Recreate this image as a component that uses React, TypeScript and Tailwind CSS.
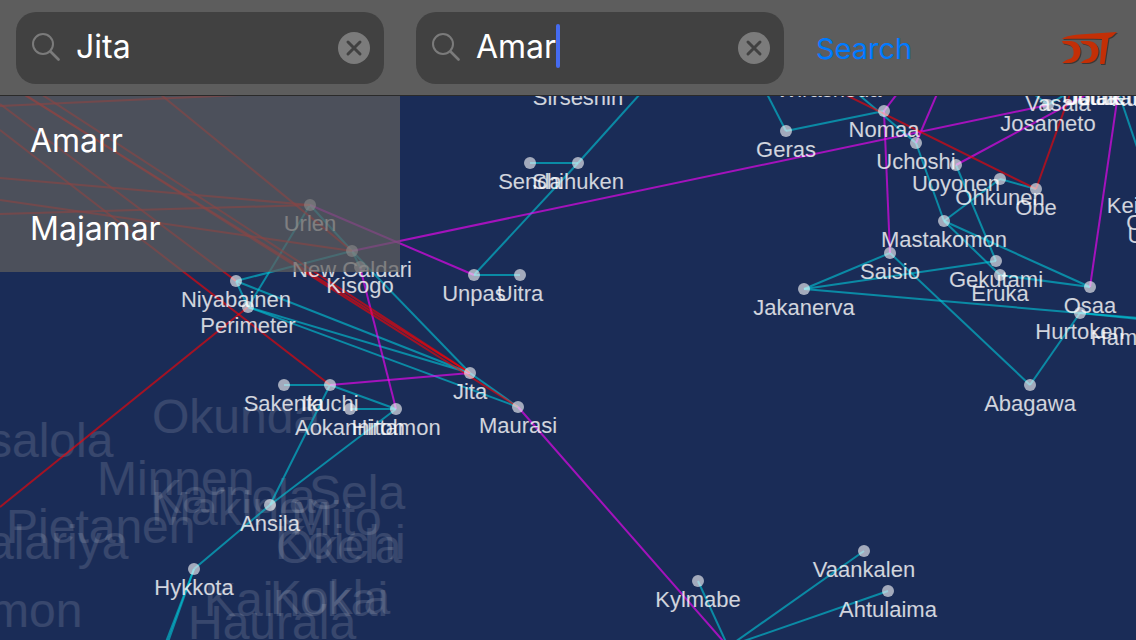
import { useState } from "react";

type Kind = "constellation" | "region" | "sector";
type Point = [number, number];
type Edge = [Kind, number, number, number, number];

const strokes: Record<Kind, string> = {
  constellation: "stroke-[#00c8d8]/60",
  region: "stroke-[#ff00ff]/60",
  sector: "stroke-[#ff0000]/60",
};

const systems: Record<string, Point> = {
  Urlen: [310, 205],
  "New Caldari": [352, 251],
  Kisogo: [360, 267],
  Niyabainen: [236, 281],
  Perimeter: [248, 307],
  Jita: [470, 373],
  Maurasi: [518, 407],
  Sakenta: [284, 385],
  Ikuchi: [330, 385],
  Aokannitoh: [350, 409],
  Hirtamon: [396, 409],
  Ansila: [270, 505],
  Hykkota: [194, 569],
  Unpas: [474, 275],
  Uitra: [520, 275],
  Senda: [530, 163],
  Shihuken: [578, 163],
  Sirseshin: [578, 79],
  Wirashoda: [829, 71],
  Geras: [786, 131],
  Nomaa: [884, 111],
  Uchoshi: [916, 143],
  Uoyonen: [956, 165],
  Ohkunen: [1000, 179],
  Obe: [1036, 189],
  Mastakomon: [944, 221],
  Saisio: [890, 253],
  Gekutami: [996, 261],
  Eruka: [1000, 275],
  Osaa: [1090, 287],
  Hurtoken: [1080, 313],
  Jakanerva: [804, 289],
  Abagawa: [1030, 385],
  Kylmabe: [698, 581],
  Vaankalen: [864, 551],
  Ahtulaima: [888, 591],
  Josameto: [1048, 105],
  Vasala: [1058, 85],
  Uotila: [1090, 79],
  Jatate: [1096, 79],
  Jotakan: [1106, 79],
  Kulelen: [1148, 80],
  Keikaken: [1152, 187],
  Otsela: [1158, 204],
  Uemon: [1163, 217],
  Hampinen: [1141, 319],
};

const links: [Kind, string, string][] = [
  ["constellation", "Urlen", "Perimeter"],
  ["constellation", "Urlen", "New Caldari"],
  ["constellation", "New Caldari", "Niyabainen"],
  ["constellation", "New Caldari", "Kisogo"],
  ["constellation", "New Caldari", "Jita"],
  ["constellation", "Niyabainen", "Perimeter"],
  ["constellation", "Niyabainen", "Jita"],
  ["constellation", "Perimeter", "Jita"],
  ["constellation", "Perimeter", "Maurasi"],
  ["constellation", "Jita", "Maurasi"],
  ["constellation", "Sakenta", "Ikuchi"],
  ["constellation", "Aokannitoh", "Hirtamon"],
  ["constellation", "Ikuchi", "Hirtamon"],
  ["constellation", "Ikuchi", "Ansila"],
  ["constellation", "Hirtamon", "Ansila"],
  ["constellation", "Ansila", "Hykkota"],
  ["constellation", "Unpas", "Uitra"],
  ["constellation", "Unpas", "Shihuken"],
  ["constellation", "Senda", "Shihuken"],
  ["constellation", "Geras", "Nomaa"],
  ["constellation", "Uchoshi", "Mastakomon"],
  ["constellation", "Mastakomon", "Ohkunen"],
  ["constellation", "Ohkunen", "Obe"],
  ["constellation", "Uoyonen", "Gekutami"],
  ["constellation", "Mastakomon", "Osaa"],
  ["constellation", "Mastakomon", "Eruka"],
  ["constellation", "Eruka", "Osaa"],
  ["constellation", "Jakanerva", "Saisio"],
  ["constellation", "Jakanerva", "Gekutami"],
  ["constellation", "Jakanerva", "Hurtoken"],
  ["constellation", "Saisio", "Abagawa"],
  ["constellation", "Hurtoken", "Abagawa"],
  ["region", "Urlen", "Unpas"],
  ["region", "New Caldari", "Josameto"],
  ["region", "Kisogo", "Hirtamon"],
  ["region", "Ikuchi", "Jita"],
  ["region", "Nomaa", "Saisio"],
];

/* Routes whose far end lies beyond the visible part of the map. */
const openEdges: Edge[] = [
  ["constellation", 194, 569, 168, 642],
  ["constellation", 194, 569, 166, 642],
  ["constellation", 578, 163, 640, 94],
  ["constellation", 767, 94, 786, 131],
  ["constellation", 858, 94, 916, 143],
  ["constellation", 1080, 313, 1138, 318],
  ["constellation", 1080, 313, 1138, 319],
  ["constellation", 698, 581, 726, 642],
  ["constellation", 864, 551, 735, 642],
  ["constellation", 888, 591, 741, 642],
  ["constellation", 1119, 94, 1138, 150],
  ["constellation", 1048, 105, 1034, 94],
  ["constellation", 1048, 105, 1066, 94],
  ["region", 518, 407, 724, 642],
  ["region", 884, 111, 897, 94],
  ["region", 916, 143, 937, 94],
  ["region", 956, 165, 1088, 94],
  ["region", 1090, 287, 1118, 94],
  ["sector", 0, 106, 260, 94],
  ["sector", 23, 94, 470, 373],
  ["sector", 41, 94, 470, 373],
  ["sector", 24, 94, 518, 407],
  ["sector", 160, 94, 352, 251],
  ["sector", 0, 178, 310, 205],
  ["sector", 0, 214, 310, 205],
  ["sector", 0, 200, 352, 251],
  ["sector", 0, 104, 236, 281],
  ["sector", 0, 130, 330, 385],
  ["sector", 248, 307, 0, 507],
  ["sector", 844, 94, 1036, 189],
  ["sector", 1036, 189, 1070, 94],
];

const constellations: [string, number, number][] = [
  ["Okunda", 152, 433],
  ["salola", -12, 457],
  ["Minnen", 97, 495],
  ["Karnola", 150, 513],
  ["Makinen", 151, 525],
  ["Sela", 309, 509],
  ["Mito", 291, 535],
  ["Pietanen", 6, 543],
  ["alariya", -13, 559],
  ["Koichi", 275, 559],
  ["Okela", 276, 563],
  ["Kainokai", 204, 616],
  ["Kokla", 270, 614],
  ["mon", -11, 627],
  ["Haurala", 188, 639],
];

function StarMap() {
  return (
    <svg
      className="absolute inset-0 h-full w-full"
      role="img"
      aria-label="Star map"
      fontFamily='"Liberation Sans", Helvetica, Arial, sans-serif'
    >
      <g transform="translate(0 -96)">
        <g className="fill-white/13 text-[48px]">
          {constellations.map(([name, x, y]) => (
            <text key={name} x={x} y={y}>
              {name}
            </text>
          ))}
        </g>
        <g strokeWidth="2">
          {links.map(([kind, a, b]) => (
            <line
              key={a + b}
              className={strokes[kind]}
              x1={systems[a][0]}
              y1={systems[a][1]}
              x2={systems[b][0]}
              y2={systems[b][1]}
            />
          ))}
          {openEdges.map(([kind, x1, y1, x2, y2], i) => (
            <line key={i} className={strokes[kind]} x1={x1} y1={y1} x2={x2} y2={y2} />
          ))}
        </g>
        {Object.entries(systems).map(([name, [x, y]]) => (
          <g key={name}>
            {x < 1136 && <circle className="fill-white/60" cx={x} cy={y} r="6" />}
            <text className="fill-white/80 text-[22px]" x={x} y={y + 26} textAnchor="middle">
              {name}
            </text>
          </g>
        ))}
      </g>
    </svg>
  );
}

function SearchField({
  id,
  label,
  value,
  onChange,
  active = false,
}: {
  id: string;
  label: string;
  value: string;
  onChange: (value: string) => void;
  active?: boolean;
}) {
  return (
    <div className="flex h-[72px] min-w-0 flex-1 items-center rounded-[20px] bg-[#414141] pr-3.5 pl-4">
      <label htmlFor={id} className="shrink-0">
        <span className="sr-only">{label}</span>
        <svg width="28" height="30" viewBox="0 0 28 30" fill="none" stroke="#7b7b7b" strokeLinecap="round">
          <circle cx="11" cy="11" r="10" strokeWidth="2" />
          <path d="M18.5 18.500 L26.500 26.500" strokeWidth="2.600" />
        </svg>
      </label>
      <input
        id={id}
        type="text"
        value={value}
        onChange={(e) => onChange(e.target.value)}
        className="ml-4 field-sizing-content bg-transparent pb-0.5 text-[32px] leading-10 text-white caret-transparent outline-none"
      />
      {active && <span className="mb-1 h-11 w-1 shrink-0 rounded-sm bg-[#456bf0]" />}
      <button
        type="button"
        aria-label={`Clear ${label}`}
        onClick={() => onChange("")}
        className="ml-auto shrink-0"
      >
        <svg width="32" height="32" viewBox="0 0 32 32" fill="none">
          <circle cx="16" cy="16" r="16" fill="#7b7b7b" />
          <path d="M10 10 L22 22 M22 10 L10 22" stroke="#414141" strokeWidth="3" strokeLinecap="round" />
        </svg>
      </button>
    </div>
  );
}

function Logo() {
  const shapes = (
    <>
      <path d="M1 8 C5 4.500 12 4 22 3.200 L56 1 C53 3.500 51.500 6 49 6.600 L47.500 7 L43.500 33 L39 33 L41 8 C28 7.600 14 7.600 1 8 Z" />
      <path d="M1 10 L9 10 C15 10 19.500 14 19.500 20 C19.500 27 15 32 8 32 L1 32 C4 29.500 6 28.500 8.500 28 C12 27 13 24 12.500 20 C12 15 9 13.500 2 12.500 Z" />
      <path d="M19.500 10 L27 10 C33 10 37.500 14 37.500 20 C37.500 27 33 32 26 32 L19.500 32 C22 29.500 24.500 28.500 26.500 28 C30 27 31 24 30.500 20 C30 15 27 13.500 21 12.500 Z" />
    </>
  );
  return (
    <svg width="60" height="36" viewBox="0 0 60 36" aria-hidden="true">
      <g transform="translate(2 2)" fill="#35302e" opacity="0.8">
        {shapes}
      </g>
      <g transform="translate(1 1)" fill="#c32f06">
        {shapes}
      </g>
    </svg>
  );
}

export default function App() {
  const [from, setFrom] = useState("Jita");
  const [to, setTo] = useState("Amar");

  return (
    <div className="flex min-h-screen flex-col bg-[#1a2c57] font-['Inter',sans-serif]">
      <header className="flex h-24 items-center border-b border-[#2a2a2a] bg-[#5d5d5d] pl-4">
        <div className="flex min-w-0 flex-1 gap-8">
          <SearchField id="from" label="Origin" value={from} onChange={setFrom} />
          <SearchField id="to" label="Destination" value={to} onChange={setTo} active />
        </div>
        <div className="flex w-[352px] shrink-0 items-center justify-between pr-4 pl-8">
          <button type="button" className="pt-0.5 text-[29px] leading-9 text-[#007aff]">
            Search
          </button>
          <a href="#about" aria-label="About">
            <Logo />
          </a>
        </div>
      </header>
      <main className="relative flex flex-1 items-start overflow-hidden">
        <StarMap />
        <ul className="relative w-[400px] bg-[#5f5e5d]/72">
          {["Amarr", "Majamar"].map((name) => (
            <li key={name}>
              <button
                type="button"
                onClick={() => setTo(name)}
                className="flex h-[88px] w-full items-center px-[30px] pt-0.5 text-[32px] text-white"
              >
                {name}
              </button>
            </li>
          ))}
        </ul>
      </main>
    </div>
  );
}
